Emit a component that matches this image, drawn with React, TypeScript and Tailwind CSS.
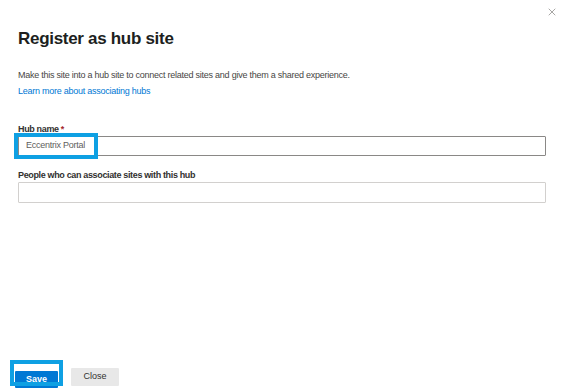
import { X } from "lucide-react";

export default function App() {
  return (
    <div className="w-[563px] h-[392px] bg-white flex flex-col font-['Liberation_Sans',sans-serif] text-[#323130] relative">

      {/* close icon */}
      <button className="absolute top-[6px] right-[5px] text-[#8a8886]">
        <X size={12} strokeWidth={1.5} />
      </button>

      <div className="flex-1 flex flex-col pl-[18px] pr-[17px]">

        <h1 className="mt-[28px] text-[17px] font-bold leading-[22px] text-[#201f1e] tracking-[-0.3px]">
          Register as hub site
        </h1>

        <p className="mt-[19px] text-[9px] leading-[13px] text-[#484644] tracking-[-0.25px]">
          Make this site into a hub site to connect related sites and give them a shared experience.
        </p>
        <a className="mt-[3px] text-[9px] leading-[13px] text-[#0078d4] tracking-[-0.25px]">
          Learn more about associating hubs
        </a>

        <label className="mt-[25px] text-[9px] leading-[12px] font-bold text-[#323130] tracking-[-0.35px]">
          Hub name <span className="text-[#a4262c]">*</span>
        </label>
        <div className="mt-[1px] relative">
          <div className="h-[20px] border border-[#8a8886] rounded-[1px] flex items-center px-[7px] text-[9px] text-[#605e5c] tracking-[-0.25px]">
            Eccentrix Portal
          </div>
          <div className="absolute left-[-4px] top-[-3px] w-[84px] h-[26px] border-[4px] border-[#0ea0e3]" />
        </div>

        <label className="mt-[13px] text-[9px] leading-[12px] font-bold text-[#323130] tracking-[-0.35px]">
          People who can associate sites with this hub
        </label>
        <div className="mt-[1px] h-[21px] border border-[#d2d0ce] rounded-[1px]" />

      </div>

      <div className="flex items-center gap-[13px] pl-[15px] pb-[3px]">
        <div className="relative">
          <button className="w-[43px] h-[17px] bg-[#0078d4] text-white text-[9px] font-bold rounded-[1px]">
            Save
          </button>
          <div className="absolute left-[-5px] top-[-5px] w-[53px] h-[26px] border-[4px] border-[#0ea0e3]" />
        </div>
        <button className="w-[48px] h-[18px] bg-[#e8e8e8] text-[#323130] text-[9px] rounded-[1px]">
          Close
        </button>
      </div>

    </div>
  )
}
